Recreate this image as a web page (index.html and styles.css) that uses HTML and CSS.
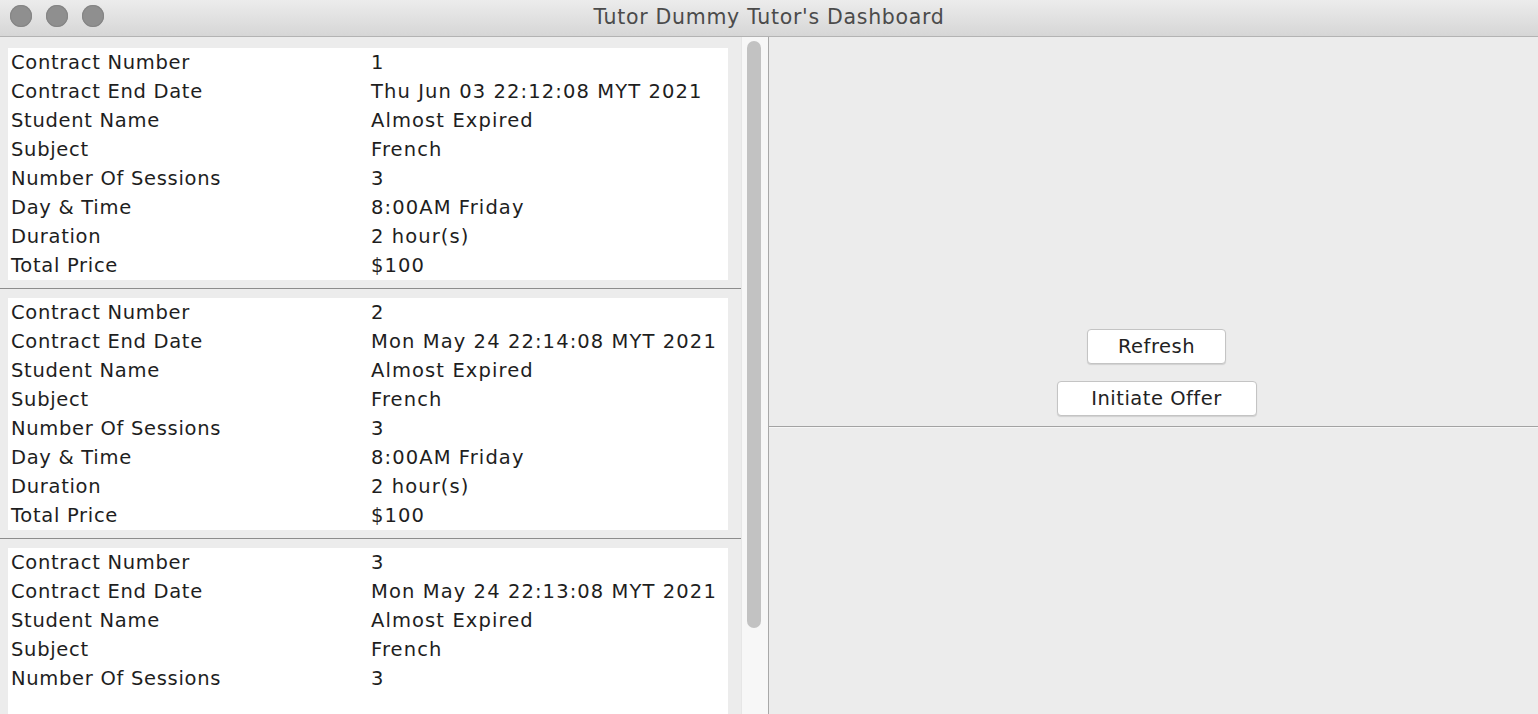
FILE: index.html
```html
<!DOCTYPE html>
<html>
<head>
<meta charset="utf-8">
<link rel="stylesheet" href="styles.css">
</head>
<body>
<div class="window">
  <div class="titlebar">
    <div class="lights"><span class="light"></span><span class="light"></span><span class="light"></span></div>
    <div class="title">Tutor Dummy Tutor's Dashboard</div>
  </div>
  <div class="content">
    <div class="listpane">
      <div class="list">
        <div class="item">
          <div class="card">
            <div class="row"><span class="label">Contract Number</span><span class="value">1</span></div>
            <div class="row"><span class="label">Contract End Date</span><span class="value">Thu Jun 03 22:12:08 MYT 2021</span></div>
            <div class="row"><span class="label">Student Name</span><span class="value">Almost Expired</span></div>
            <div class="row"><span class="label">Subject</span><span class="value">French</span></div>
            <div class="row"><span class="label">Number Of Sessions</span><span class="value">3</span></div>
            <div class="row"><span class="label">Day &amp; Time</span><span class="value">8:00AM Friday</span></div>
            <div class="row"><span class="label">Duration</span><span class="value">2 hour(s)</span></div>
            <div class="row"><span class="label">Total Price</span><span class="value">$100</span></div>
          </div>
        </div>
        <div class="item">
          <div class="card">
            <div class="row"><span class="label">Contract Number</span><span class="value">2</span></div>
            <div class="row"><span class="label">Contract End Date</span><span class="value">Mon May 24 22:14:08 MYT 2021</span></div>
            <div class="row"><span class="label">Student Name</span><span class="value">Almost Expired</span></div>
            <div class="row"><span class="label">Subject</span><span class="value">French</span></div>
            <div class="row"><span class="label">Number Of Sessions</span><span class="value">3</span></div>
            <div class="row"><span class="label">Day &amp; Time</span><span class="value">8:00AM Friday</span></div>
            <div class="row"><span class="label">Duration</span><span class="value">2 hour(s)</span></div>
            <div class="row"><span class="label">Total Price</span><span class="value">$100</span></div>
          </div>
        </div>
        <div class="item">
          <div class="card card-last">
            <div class="row"><span class="label">Contract Number</span><span class="value">3</span></div>
            <div class="row"><span class="label">Contract End Date</span><span class="value">Mon May 24 22:13:08 MYT 2021</span></div>
            <div class="row"><span class="label">Student Name</span><span class="value">Almost Expired</span></div>
            <div class="row"><span class="label">Subject</span><span class="value">French</span></div>
            <div class="row"><span class="label">Number Of Sessions</span><span class="value">3</span></div>
          </div>
        </div>
      </div>
      <div class="scrolltrack"><div class="thumb"></div></div>
    </div>
    <div class="rightpane">
      <div class="actions">
        <button class="btn btn-refresh">Refresh</button>
        <button class="btn btn-offer">Initiate Offer</button>
      </div>
      <div class="lower"></div>
    </div>
  </div>
</div>
</body>
</html>
```

FILE: styles.css
```css
html, body {
  margin: 0;
  padding: 0;
  width: 1538px;
  height: 714px;
  overflow: hidden;
  background: #ececec;
}

.window {
  width: 1538px;
  height: 714px;
  display: flex;
  flex-direction: column;
  font-family: "DejaVu Sans", "Open Sans", sans-serif;
  color: #1e1e1e;
}

.titlebar {
  height: 37px;
  flex: none;
  box-sizing: border-box;
  padding-bottom: 2px;
  position: relative;
  background: linear-gradient(#ececec, #d6d6d6);
  border-bottom: 1px solid #b3b3b3;
  display: flex;
  align-items: center;
  justify-content: center;
}

.lights {
  position: absolute;
  left: 10px;
  top: 5px;
  display: flex;
  gap: 14px;
}

.light {
  width: 22px;
  height: 22px;
  border-radius: 50%;
  background: #8f8f8f;
  box-shadow: inset 0 0 0 1px #858585;
}

.title {
  font-size: 20.5px;
  color: #4b4b4b;
  letter-spacing: 0.7px;
}

.content {
  flex: 1;
  display: flex;
  min-height: 0;
}

.listpane {
  width: 768px;
  flex: none;
  display: flex;
  border-right: 1px solid #a8a8a8;
  background: #ececec;
  overflow: hidden;
}

.list {
  width: 741px;
  flex: none;
  padding-top: 2px;
}

.item {
  padding: 9px 0 8px 0;
  border-bottom: 1px solid #8c8c8c;
}

.card {
  margin-left: 8px;
  width: 720px;
  background: #ffffff;
}

.card-last {
  height: 232px;
}

.row {
  height: 29px;
  display: flex;
  align-items: center;
  font-size: 19.5px;
  letter-spacing: 0.7px;
  line-height: 29px;
}

.label {
  width: 363px;
  padding-left: 3px;
  box-sizing: border-box;
  flex: none;
}

.value {
  white-space: nowrap;
  letter-spacing: 1.1px;
}

.scrolltrack {
  width: 27px;
  flex: none;
  background: #f7f7f7;
  border-left: 1px solid #e6e6e6;
  box-sizing: border-box;
  padding: 4px 0 0 5px;
}

.thumb {
  width: 14px;
  height: 587px;
  border-radius: 7px;
  background: #c2c2c2;
}

.rightpane {
  flex: 1;
  display: flex;
  flex-direction: column;
  background: #ececec;
}

.actions {
  height: 390px;
  box-sizing: border-box;
  border-bottom: 1px solid #a3a3a3;
  display: flex;
  flex-direction: column;
  align-items: center;
  justify-content: flex-end;
  gap: 17px;
  padding: 0 0 10px 6px;
}

.btn {
  font-family: "DejaVu Sans", "Open Sans", sans-serif;
  font-size: 19.5px;
  letter-spacing: 0.5px;
  color: #222;
  background: #ffffff;
  border: 1px solid #c4c4c4;
  border-radius: 4px;
  box-shadow: 0 1px 1px rgba(0,0,0,0.12);
  height: 35px;
  padding: 0;
  line-height: 33px;
}

.btn-refresh {
  width: 139px;
}

.btn-offer {
  width: 200px;
}

.lower {
  flex: 1;
  border-top: 1px solid #f6f6f6;
}
```
